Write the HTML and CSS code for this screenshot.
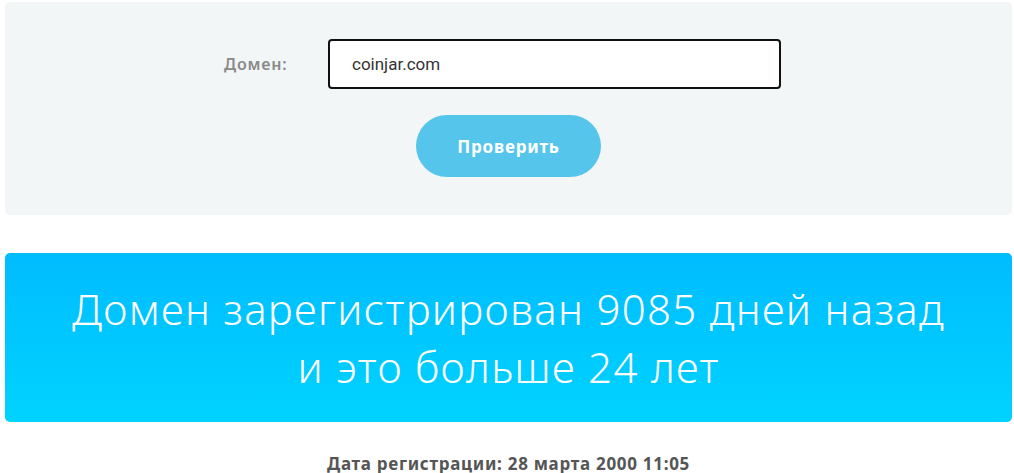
FILE: index.html
```html
<!DOCTYPE html>
<html lang="ru">
<head>
  <meta charset="UTF-8">
  <meta name="viewport" content="width=device-width, initial-scale=1.0">
  <title>Проверка возраста домена</title>
  <link rel="stylesheet" href="styles.css">
</head>
<body>
  <form class="check-form" onsubmit="return false">
    <div class="form-row">
      <label class="form-label" for="domain">Домен:</label>
      <input class="form-input" id="domain" type="text" value="coinjar.com">
    </div>
    <button class="check-button" type="submit">Проверить</button>
  </form>

  <div class="result">
    <p>Домен зарегистрирован 9085 дней назад<br>и это больше 24 лет</p>
  </div>

  <p class="reg-date">Дата регистрации: 28 марта 2000 11:05</p>
</body>
</html>
```

FILE: styles.css
```css
body {
  margin: 2px 2px 0 5px;
  font-family: 'Noto Sans', 'DejaVu Sans', sans-serif;
  background: #fff;
  color: #555;
}

/* Form panel */
.check-form {
  background: #f3f6f7;
  border-radius: 5px;
  height: 213px;
  box-sizing: border-box;
  padding-top: 37px;
  display: flex;
  flex-direction: column;
  align-items: center;
}

.form-row {
  display: flex;
  align-items: center;
  margin-left: -14px;
}

.form-label {
  width: 106px;
  padding-left: 2px;
  box-sizing: border-box;
  font-size: 16px;
  font-weight: 600;
  letter-spacing: 0.8px;
  color: #8a8a8a;
}

.form-input {
  width: 453px;
  height: 50px;
  box-sizing: border-box;
  border: 2px solid #111;
  border-radius: 4px;
  padding: 0 22px;
  font-family: Roboto, sans-serif;
  font-size: 17px;
  color: #333;
  background: #fff;
  outline: none;
}

.check-button {
  margin-top: 26px;
  width: 185px;
  height: 62px;
  border: none;
  border-radius: 31px;
  background: #56c5ec;
  color: #fff;
  font-family: inherit;
  font-size: 17px;
  font-weight: 700;
  letter-spacing: 0.8px;
  cursor: pointer;
}

/* Result banner */
.result {
  margin-top: 38px;
  height: 169px;
  border-radius: 5px;
  background: linear-gradient(to bottom, #00bcff, #00d3ff);
  display: flex;
  align-items: center;
  justify-content: center;
  text-align: center;
}

.result p {
  margin: 0;
  color: #fff;
  font-size: 42px;
  font-weight: 300;
  letter-spacing: 1.3px;
  line-height: 58px;
}

.reg-date {
  margin: 30px 0 0;
  text-align: center;
  font-size: 17px;
  font-weight: 700;
  letter-spacing: 0.7px;
  color: #555;
}
```
